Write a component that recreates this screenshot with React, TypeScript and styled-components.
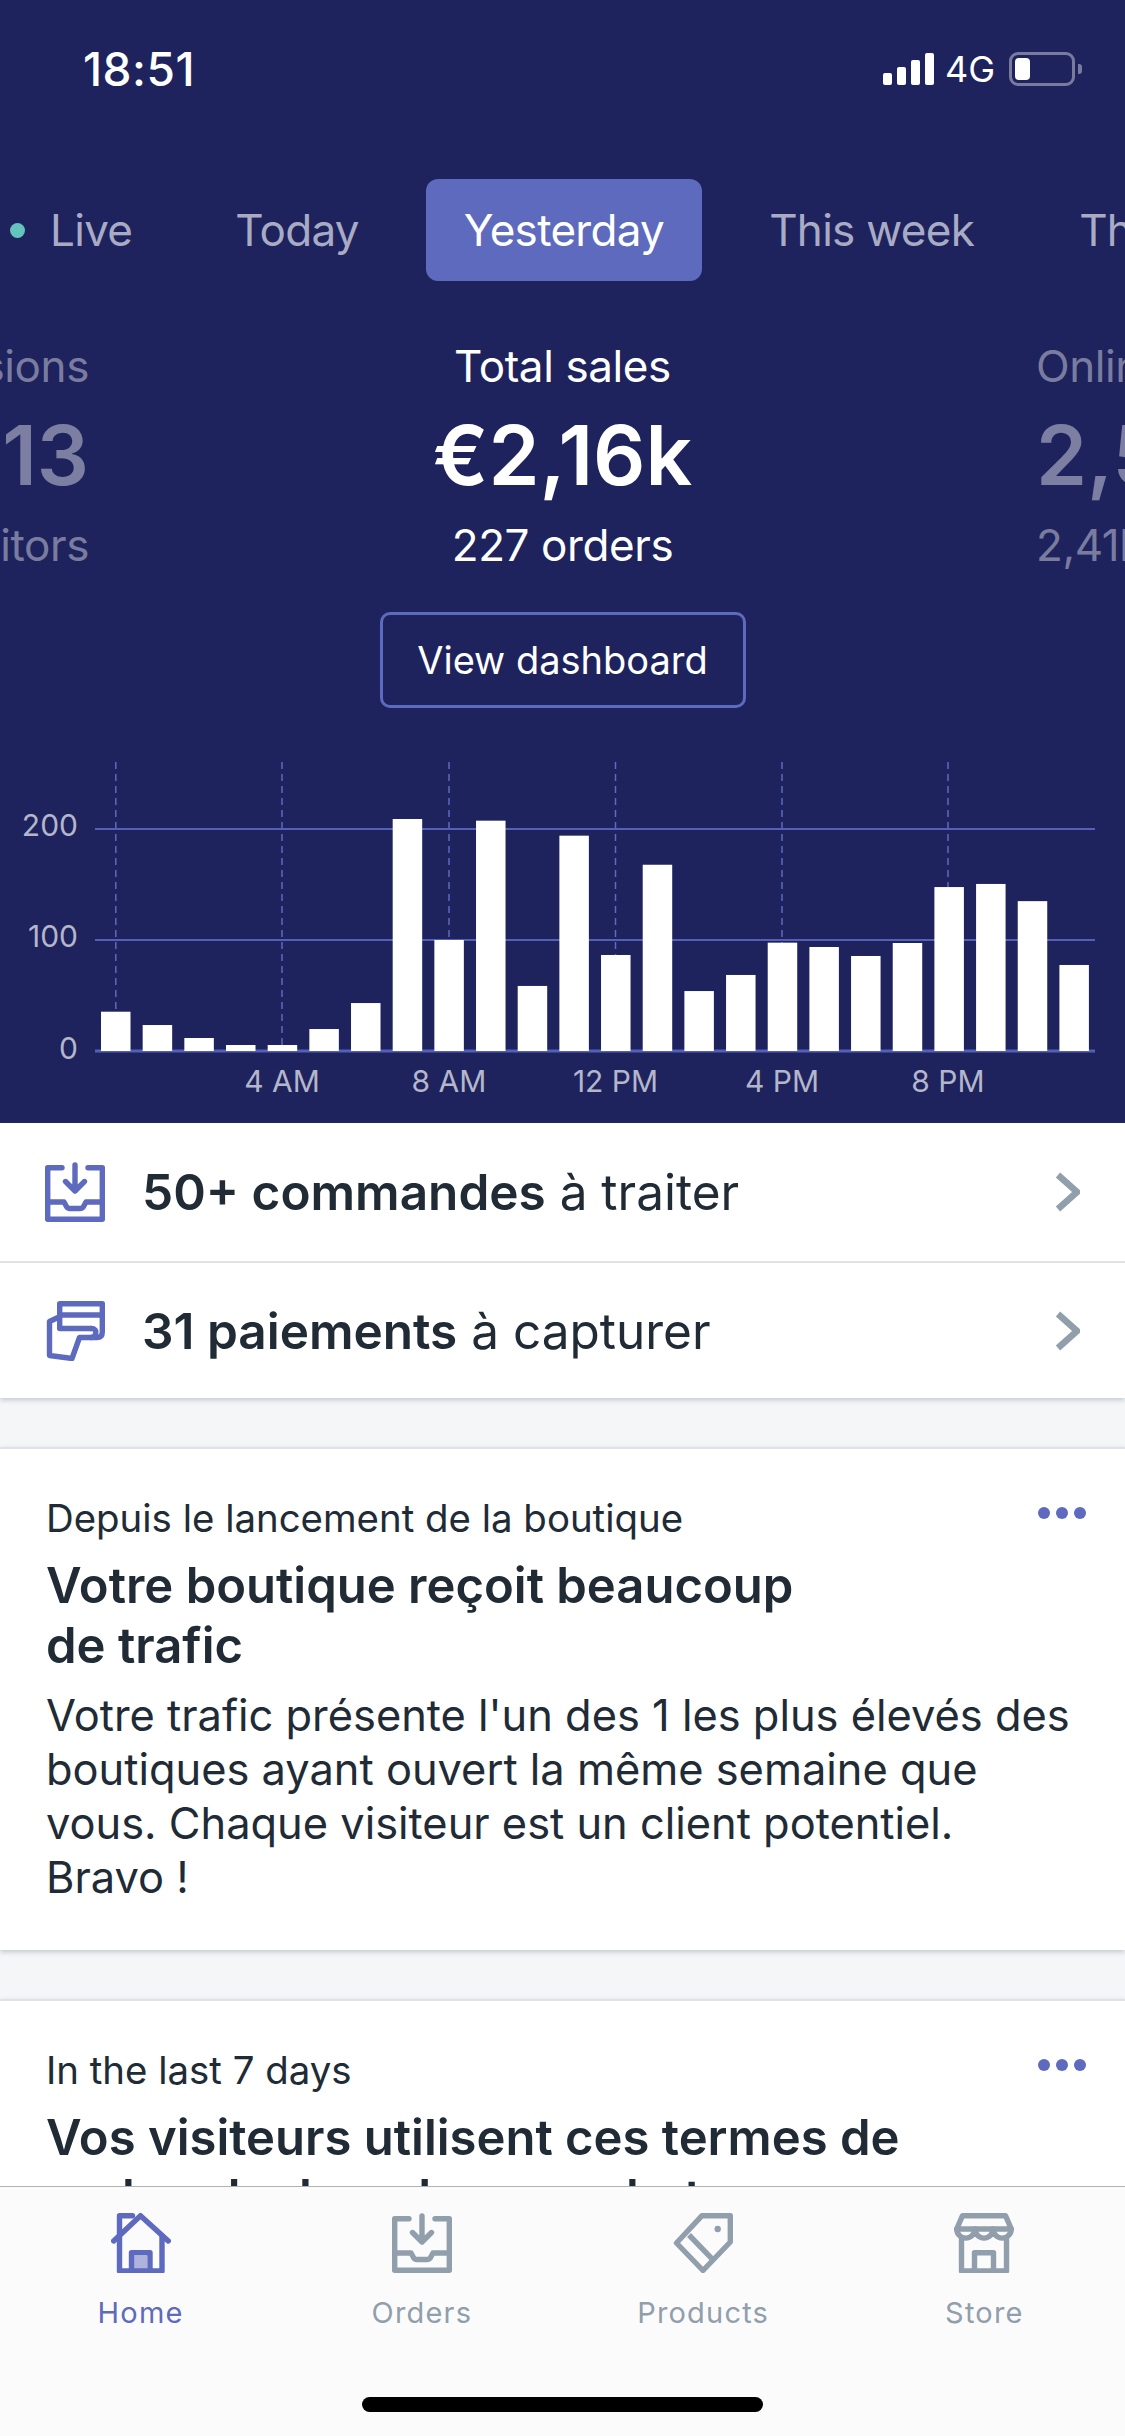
import styled, { createGlobalStyle } from 'styled-components';

const NAVY = '#1e235e';
const INDIGO = '#5e6abd';
const INK = '#212b36';
const SLATE = '#919eab';

const GlobalStyle = createGlobalStyle`
  html, body {
    margin: 0;
    padding: 0;
    background: #f4f6f8;
    overflow: hidden;
  }
  * {
    box-sizing: border-box;
  }
`;

const tabs = ['Live', 'Today', 'Yesterday', 'This week', 'This month'];

const bars = [
  35.4, 23.4, 11.7, 5.4, 5.4, 19.8, 43.2, 209, 100, 207.5, 58.6, 194, 86.5, 167.8, 54, 68.5, 97.6,
  93.7, 85.6, 97.3, 147.7, 150.5, 135, 77.5,
];

const hours = [
  { x: 115.8, label: '' },
  { x: 282, label: '4 AM' },
  { x: 449, label: '8 AM' },
  { x: 615.5, label: '12 PM' },
  { x: 782, label: '4 PM' },
  { x: 948, label: '8 PM' },
];

const SalesChart = () => {
  const baseline = 289;
  const scale = 1.11;
  return (
    <svg width="1125" height="361" viewBox="0 0 1125 361" style={{ display: 'block' }}>
      {hours.map((h) => (
        <line key={h.x} x1={h.x} x2={h.x} y1={0} y2={baseline} stroke="#5e6abd" strokeWidth="1.5" strokeDasharray="7 5" />
      ))}
      {[0, 100, 200].map((v) => (
        <g key={v}>
          <line x1={95} x2={1095} y1={baseline - v * scale} y2={baseline - v * scale} stroke="#5460b8" strokeWidth={v === 0 ? 3 : 2} />
          <text x={78} y={baseline - v * scale + (v === 0 ? 8 : 7)} textAnchor="end" fontFamily="Inter, sans-serif" fontSize="30" fill="#b4b6cb">
            {v}
          </text>
        </g>
      ))}
      {bars.map((v, i) => (
        <rect key={i} x={101 + i * 41.67} y={baseline - v * scale} width={29.5} height={v * scale} fill="#fff" />
      ))}
      {hours.map((h) => (
        <text key={h.x} x={h.x} y={330} textAnchor="middle" fontFamily="Inter, sans-serif" fontSize="30" fill="#b4b6cb">
          {h.label}
        </text>
      ))}
    </svg>
  );
};

const InboxIcon = ({ color }: { color: string }) => (
  <svg width="60" height="60" viewBox="0 0 60 60" fill="none" stroke={color} strokeWidth="5.4" strokeLinejoin="round" strokeLinecap="round">
    <path d="M17 5.7H2.7V57.3H57.3V5.7H43" />
    <path d="M30 3V28M20.5 19.5L30 29L39.5 19.5" />
    <path d="M2.7 40H19L21.5 44.5Q22.5 46.5 25 46.5H35Q37.5 46.5 38.5 44.5L41 40H57.3" />
  </svg>
);

const PaymentIcon = () => (
  <svg width="60" height="60" viewBox="0 0 60 60" fill="none" stroke={INDIGO} strokeWidth="5.4" strokeLinejoin="round" strokeLinecap="round">
    <path d="M14.7 14H57.3" />
    <path d="M46 27.5H14.7V2.7H57.3V31Q57.3 36.5 52 36.5H34.5L27 57.5L4.5 54.5V20.5L14 16" />
    <path d="M46 27.5Q52 27.5 50.5 33Q49.5 36.5 46 36.5" />
  </svg>
);

const HomeIcon = () => (
  <svg width="60" height="60" viewBox="0 0 60 60" fill="none" stroke={INDIGO} strokeWidth="5.4" strokeLinejoin="round" strokeLinecap="round">
    <rect x="23" y="43" width="13" height="13" fill="#aeb3de" stroke="none" />
    <path d="M2.7 28L29.5 2.7L57.3 28" />
    <path d="M8.5 22V2.7H21.5M8.5 22V58H51V24" />
    <path d="M20.5 58V39.7H39V58" />
  </svg>
);

const TagIcon = () => (
  <svg width="60" height="60" viewBox="0 0 60 60" fill="none" stroke={SLATE} strokeWidth="5.4" strokeLinejoin="round" strokeLinecap="round">
    <path d="M29 2.7H57.3V29L30 57.5L3.5 30Z" />
    <path d="M16 22L38.6 45.3" strokeLinecap="butt" />
    <circle cx="44.7" cy="16" r="3.2" fill={SLATE} stroke="none" />
  </svg>
);

const StoreIcon = () => (
  <svg width="60" height="60" viewBox="0 0 60 60" fill="none" stroke={SLATE} strokeWidth="5.4" strokeLinejoin="round" strokeLinecap="round">
    <path d="M8.5 2.7H51.5L57.3 16H2.7Z" />
    <path d="M2.7 16A9 9 0 0 0 20.9 16A9.1 9.1 0 0 0 39.1 16A9 9 0 0 0 57.3 16" />
    <path d="M7.5 25V58H52.5V25" />
    <path d="M20.5 58V39.7H39.5V58" />
  </svg>
);

const Chevron = () => (
  <svg width="25" height="40" viewBox="0 0 25 40" fill="none" stroke={SLATE} strokeWidth="6.5">
    <path d="M3 3L22 20L3 37" />
  </svg>
);

export default function App() {
  return (
    <>
      <GlobalStyle />
      <Screen>
        <Scroller>
          <Dashboard>
            <StatusBar>
              <Clock>18:51</Clock>
              <StatusRight>
                <Signal>
                  <SignalBar $height={12} />
                  <SignalBar $height={18} />
                  <SignalBar $height={25} />
                  <SignalBar $height={32} />
                </Signal>
                <Network>4G</Network>
                <Battery>
                  <BatteryLevel />
                </Battery>
                <BatteryCap />
              </StatusRight>
            </StatusBar>

            <TabStrip>
              {tabs.map((t) => (
                <Tab key={t} $active={t === 'Yesterday'} $live={t === 'Live'}>
                  {t === 'Live' && <LiveDot />}
                  {t}
                </Tab>
              ))}
            </TabStrip>

            <Stats>
              <Stat $side="left">
                <StatLabel>Sessions</StatLabel>
                <StatValue>3 113</StatValue>
                <StatLabel>2 780 visitors</StatLabel>
              </Stat>
              <Stat>
                <StatLabel>Total sales</StatLabel>
                <StatValue>€2,16k</StatValue>
                <StatNote>227 orders</StatNote>
                <DashboardButton>View dashboard</DashboardButton>
              </Stat>
              <Stat $side="right">
                <StatLabel>Online store visits</StatLabel>
                <StatValue>2,55k</StatValue>
                <StatLabel>2,41k visitors</StatLabel>
              </Stat>
            </Stats>

            <ChartBox>
              <SalesChart />
            </ChartBox>
          </Dashboard>

          <TodoList>
            <TodoRow>
              <InboxIcon color={INDIGO} />
              <TodoText>
                <strong>50+ commandes</strong> à traiter
              </TodoText>
              <Chevron />
            </TodoRow>
            <TodoRow>
              <PaymentIcon />
              <TodoText>
                <strong>31 paiements</strong> à capturer
              </TodoText>
              <Chevron />
            </TodoRow>
          </TodoList>

          <Card>
            <CardHeader>
              <CardEyebrow>Depuis le lancement de la boutique</CardEyebrow>
              <Dots>
                <i />
                <i />
                <i />
              </Dots>
            </CardHeader>
            <CardTitle>Votre boutique reçoit beaucoup de{'\u00a0'}trafic</CardTitle>
            <CardBody>
              Votre trafic présente l'un des 1 les plus élevés des boutiques ayant ouvert la même semaine que vous. Chaque
              visiteur est un client potentiel. Bravo !
            </CardBody>
          </Card>

          <Card>
            <CardHeader>
              <CardEyebrow>In the last 7 days</CardEyebrow>
              <Dots>
                <i />
                <i />
                <i />
              </Dots>
            </CardHeader>
            <CardTitle>Vos visiteurs utilisent ces termes de recherche lors de vos achats</CardTitle>
          </Card>
        </Scroller>

        <TabBar>
          <NavItems>
            <NavItem $active>
              <HomeIcon />
              Home
            </NavItem>
            <NavItem>
              <InboxIcon color={SLATE} />
              Orders
            </NavItem>
            <NavItem>
              <TagIcon />
              Products
            </NavItem>
            <NavItem>
              <StoreIcon />
              Store
            </NavItem>
          </NavItems>
          <HomeIndicator />
        </TabBar>
      </Screen>
    </>
  );
}

const Screen = styled.div`
  width: 1125px;
  height: 2436px;
  display: flex;
  flex-direction: column;
  overflow: hidden;
  font-family: Inter, 'Noto Sans', sans-serif;
  color: ${INK};
`;

const Scroller = styled.div`
  flex: 1;
  min-height: 0;
  overflow: hidden;
`;

const Dashboard = styled.section`
  height: 1123px;
  background: ${NAVY};
  color: #fff;
  overflow: hidden;
`;

const StatusBar = styled.div`
  height: 179px;
  padding: 47px 43px 0 83px;
  display: flex;
  justify-content: space-between;
  align-items: flex-start;
`;

const Clock = styled.div`
  font-size: 46px;
  line-height: 44px;
  font-weight: 500;
  letter-spacing: 0.5px;
`;

const StatusRight = styled.div`
  display: flex;
  align-items: center;
  height: 44px;
`;

const Signal = styled.div`
  display: flex;
  align-items: flex-end;
  gap: 5px;
  height: 32px;
  margin-right: 11px;
`;

const SignalBar = styled.span<{ $height: number }>`
  width: 9px;
  height: ${(p) => p.$height}px;
  background: #fff;
  border-radius: 2px;
`;

const Network = styled.div`
  font-size: 36px;
  line-height: 44px;
  margin-right: 14px;
`;

const Battery = styled.div`
  width: 66px;
  height: 34px;
  border: 3px solid rgba(255, 255, 255, 0.4);
  border-radius: 9px;
  padding: 3px;
`;

const BatteryLevel = styled.div`
  width: 15px;
  height: 100%;
  background: #fff;
  border-radius: 4px;
`;

const BatteryCap = styled.div`
  width: 4px;
  height: 10px;
  margin-left: 3px;
  background: rgba(255, 255, 255, 0.4);
  border-radius: 0 3px 3px 0;
`;

const TabStrip = styled.div`
  display: flex;
  gap: 29px;
  padding-left: 10px;
  white-space: nowrap;
`;

const Tab = styled.div<{ $active?: boolean; $live?: boolean }>`
  height: 102px;
  display: flex;
  align-items: center;
  padding: 0 ${(p) => (p.$live ? 36 : 38)}px 0 ${(p) => (p.$live ? 0 : 38)}px;
  border-radius: 12px;
  font-size: 44px;
  letter-spacing: -0.7px;
  background: ${(p) => (p.$active ? INDIGO : 'transparent')};
  color: ${(p) => (p.$active ? '#fff' : '#a9abc4')};
`;

const LiveDot = styled.span`
  width: 15px;
  height: 15px;
  margin-right: 25px;
  border-radius: 50%;
  background: #64c3bd;
`;

const Stats = styled.div`
  display: grid;
  grid-template-columns: 89px 1fr 89px;
  padding-top: 58px;
  white-space: nowrap;
`;

const Stat = styled.div<{ $side?: 'left' | 'right' }>`
  display: flex;
  flex-direction: column;
  align-items: ${(p) => (p.$side === 'left' ? 'flex-end' : p.$side === 'right' ? 'flex-start' : 'center')};
  color: ${(p) => (p.$side ? 'rgba(255, 255, 255, 0.42)' : '#fff')};
`;

const StatLabel = styled.div`
  font-size: 44px;
  line-height: 54px;
  letter-spacing: -0.4px;
`;

const StatValue = styled.div`
  margin: 18px 0 17px;
  font-size: 82px;
  line-height: 90px;
  font-weight: 600;
`;

const StatNote = styled(StatLabel)``;

const DashboardButton = styled.div`
  width: 366px;
  height: 96px;
  margin-top: 40px;
  display: flex;
  align-items: center;
  justify-content: center;
  border: 3px solid ${INDIGO};
  border-radius: 10px;
  font-size: 38px;
`;

const ChartBox = styled.div`
  margin-top: 54px;
`;

const TodoList = styled.div`
  background: #fff;
  box-shadow: 0 2px 5px rgba(99, 115, 129, 0.35);
`;

const TodoRow = styled.div`
  height: 138px;
  padding: 0 45px;
  display: flex;
  align-items: center;
  gap: 37px;
  & + & {
    height: 137px;
    border-top: 2px solid #dfe3e8;
  }
`;

const TodoText = styled.div`
  flex: 1;
  font-size: 49.5px;
  strong {
    font-weight: 600;
  }
`;

const Card = styled.article`
  margin-top: 49px;
  padding: 47px 39px 46px 46px;
  background: #fff;
  border-top: 2px solid #dfe3e8;
  box-shadow: 0 2px 5px rgba(99, 115, 129, 0.35);
`;

const CardHeader = styled.div`
  display: flex;
  justify-content: space-between;
  align-items: flex-start;
`;

const CardEyebrow = styled.div`
  font-size: 38.4px;
  line-height: 44px;
`;

const Dots = styled.div`
  display: flex;
  gap: 6px;
  margin-top: 11px;
  i {
    width: 12px;
    height: 12px;
    border-radius: 50%;
    background: ${INDIGO};
  }
`;

const CardTitle = styled.h2`
  max-width: 870px;
  margin: 16px 0 0;
  font-size: 49px;
  line-height: 60px;
  font-weight: 600;
`;

const CardBody = styled.p`
  max-width: 1033px;
  margin: 12px 0 0;
  font-size: 43.4px;
  line-height: 54px;
`;

const TabBar = styled.nav`
  height: 250px;
  padding-top: 26px;
  background: #fbfbfb;
  border-top: 1px solid #b2b2b2;
  display: flex;
  flex-direction: column;
  align-items: center;
`;

const NavItems = styled.div`
  width: 100%;
  display: grid;
  grid-template-columns: repeat(4, 1fr);
`;

const NavItem = styled.div<{ $active?: boolean }>`
  display: flex;
  flex-direction: column;
  align-items: center;
  gap: 20px;
  font-size: 29px;
  line-height: 40px;
  letter-spacing: 1.2px;
  color: ${(p) => (p.$active ? INDIGO : SLATE)};
`;

const HomeIndicator = styled.div`
  width: 401px;
  height: 15px;
  margin-top: 64px;
  border-radius: 8px;
  background: #000;
`;
